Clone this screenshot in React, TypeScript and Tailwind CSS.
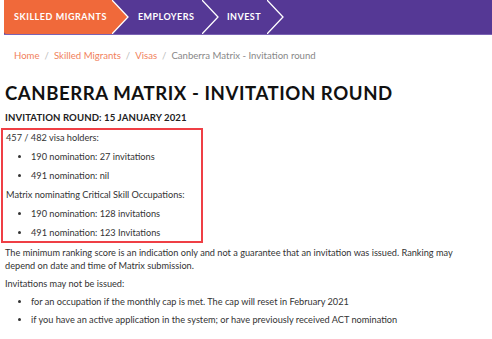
import React from "react";

function Chevron({ fill, next }: { fill: string; next: string }) {
  return (
    <svg width="17" height="34" viewBox="0 0 17 34" className="block shrink-0">
      <rect x="0" y="0" width="17" height="34" fill={next} />
      <polygon points="0,0 16,17 0,34" fill={fill} />
      <polyline points="0,0 16,17 0,34" fill="none" stroke="#ffffff" strokeWidth="1.3" />
    </svg>
  );
}

export default function App() {
  const body = { fontFamily: "Lato, 'Open Sans', sans-serif" };
  return (
    <div className="w-[492px] h-[339px] bg-white overflow-hidden text-[#333]" style={body}>
      <div className="flex h-[35px] pl-[4px]">
        <div className="flex flex-1 bg-[#553895] border-b border-[#7a63b3]">
          <div className="flex items-center bg-[#f0693a] w-[108px] pl-[10px] rounded-bl-[2px]">
            <span className="whitespace-nowrap text-white font-bold text-[9px] tracking-[0.06em]">SKILLED MIGRANTS</span>
          </div>
          <Chevron fill="#f0693a" next="#553895" />
          <div className="flex items-center w-[73px] pl-[9px]">
            <span className="whitespace-nowrap text-white font-bold text-[9px] tracking-[0.05em]">EMPLOYERS</span>
          </div>
          <Chevron fill="#553895" next="#553895" />
          <div className="flex items-center w-[48px] pl-[8px]">
            <span className="whitespace-nowrap text-white font-bold text-[9px] tracking-[0.05em]">INVEST</span>
          </div>
          <Chevron fill="#553895" next="#553895" />
        </div>
      </div>

      <div className="pl-[14px] pt-[15px] text-[9.6px] leading-[12px] whitespace-nowrap">
        <span className="text-[#f17f5c]">Home</span>
        <span className="text-[#bbb] mx-[5px]">/</span>
        <span className="text-[#f17f5c]">Skilled Migrants</span>
        <span className="text-[#bbb] mx-[5px]">/</span>
        <span className="text-[#f17f5c]">Visas</span>
        <span className="text-[#bbb] mx-[5px]">/</span>
        <span className="text-[#888]">Canberra Matrix - Invitation round</span>
      </div>

      <div className="px-[5px]">
        <h1 className="mt-[20px] text-[18.6px] leading-[22px] font-bold text-[#111] tracking-[0.03em] whitespace-nowrap">
          CANBERRA MATRIX - INVITATION ROUND
        </h1>
        <h2 className="mt-[8px] text-[9.6px] leading-[12px] font-bold text-[#222] tracking-[0.01em] whitespace-nowrap">
          INVITATION ROUND: 15 JANUARY 2021
        </h2>
      </div>

      <div className="mt-[4px] ml-[1px] w-[202px] border-2 border-[#ef3f45] pl-[3px] pt-[2px] pb-[2px] text-[9.2px] leading-[12.5px]">
        <p>457 / 482 visa holders:</p>
        <ul className="list-disc pl-[25px]">
          <li className="mt-[6px]">190 nomination: 27 invitations</li>
          <li className="mt-[6.5px]">491 nomination: nil</li>
        </ul>
        <p className="mt-[7px] whitespace-nowrap">Matrix nominating Critical Skill Occupations:</p>
        <ul className="list-disc pl-[25px]">
          <li className="mt-[6px]">190 nomination: 128 invitations</li>
          <li className="mt-[6.5px]">491 nomination: 123 Invitations</li>
        </ul>
      </div>

      <div className="px-[5px] text-[9.2px] leading-[12.5px]">
        <p className="mt-[4px] pr-[18px]">
          The minimum ranking score is an indication only and not a guarantee that an invitation was issued. Ranking may depend on date and time of Matrix submission.
        </p>
        <p className="mt-[5.5px]">Invitations may not be issued:</p>
        <ul className="list-disc pl-[26px]">
          <li className="mt-[6px]">for an occupation if the monthly cap is met. The cap will reset in February 2021</li>
          <li className="mt-[5.5px]">if you have an active application in the system; or have previously received ACT nomination</li>
        </ul>
      </div>
    </div>
  );
}
